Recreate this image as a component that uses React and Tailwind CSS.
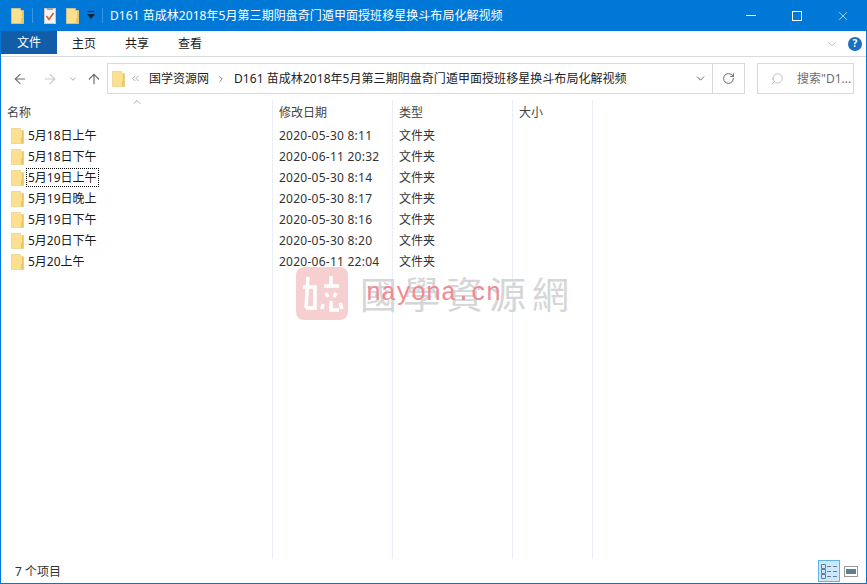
import { ArrowLeft, ArrowRight, ArrowUp, ChevronDown, ChevronRight, ChevronUp, ChevronsLeft, RotateCw, Search, X } from "lucide-react";

const rows = [
  { name: "5月18日上午", date: "2020-05-30 8:11" },
  { name: "5月18日下午", date: "2020-06-11 20:32" },
  { name: "5月19日上午", date: "2020-05-30 8:14", focus: true },
  { name: "5月19日晚上", date: "2020-05-30 8:17" },
  { name: "5月19日下午", date: "2020-05-30 8:16" },
  { name: "5月20日下午", date: "2020-05-30 8:20" },
  { name: "5月20上午", date: "2020-06-11 22:04" },
];

function Folder({ className }) {
  return (
    <svg className={className} width="13" height="16" viewBox="0 0 13 16">
      <path d="M0.5 0.5H9.5V2.5H12.5V15.5H0.5Z" fill="#fde08f" stroke="#e8cf8a" strokeWidth="0.7" />
      <path d="M10 10V15.5H12.5V3H11V10Z" fill="#eec65f" />
    </svg>
  );
}

function Sep() {
  return <div className="w-px h-[15px] bg-[#3a96de]" />;
}

export default function App() {
  return (
    <div className="relative w-[867px] h-[584px] flex flex-col bg-white overflow-hidden border-x border-b border-[#0078d7] text-[12px] text-[#1a1a1a] font-['Noto_Sans','Noto_Sans_CJK_SC',sans-serif]">
      {/* title bar */}
      <div className="h-[31px] shrink-0 bg-[#0078d7] flex items-center text-white pl-[10px]">
        <Folder />
        <div className="ml-[8px]"><Sep /></div>
        <svg className="ml-[11px]" width="12" height="16" viewBox="0 0 12 16">
          <rect x="0.5" y="0.5" width="11" height="15" fill="#f4f4f4" stroke="#c9c9c9" />
          <rect x="3" y="0" width="6" height="2" fill="#a9a9a9" />
          <path d="M2.5 8L5 11.5L9.5 5" fill="none" stroke="#d9572b" strokeWidth="1.5" />
        </svg>
        <Folder className="ml-[10px]" />
        <svg className="ml-[8px]" width="8" height="9" viewBox="0 0 8 9">
          <rect x="0.5" y="0" width="7" height="1" fill="#12263a" />
          <path d="M0 3H8L4 8Z" fill="#12263a" />
        </svg>
        <div className="ml-[7px]"><Sep /></div>
        <span className="ml-[7px] whitespace-nowrap tracking-[0.05px]">D161 苗成林2018年5月第三期阴盘奇门遁甲面授班移星换斗布局化解视频</span>
        <div className="ml-auto flex items-center h-full">
          <div className="w-[46px] flex justify-center"><div className="w-[10px] h-px bg-white" /></div>
          <div className="w-[45px] flex justify-center"><div className="w-[10px] h-[10px] border border-white" /></div>
          <div className="w-[47px] flex justify-center"><X size={14} strokeWidth={1.1} /></div>
        </div>
      </div>

      {/* ribbon tabs */}
      <div className="h-[26px] shrink-0 flex items-center border-b border-[#dadbdc]">
        <div className="w-[56px] h-[23px] self-start bg-[#125da8] text-white flex items-center justify-center">文件</div>
        <span className="ml-[15px]">主页</span>
        <span className="ml-[29px]">共享</span>
        <span className="ml-[29px]">查看</span>
        <ChevronDown className="ml-auto text-[#9a9a9a]" size={14} strokeWidth={1.2} />
        <div className="ml-[9px] mr-[4px] w-[14px] h-[14px] rounded-full bg-[#1a6fc0] text-white text-[10px] font-bold flex items-center justify-center">?</div>
      </div>

      {/* address row */}
      <div className="h-[37px] shrink-0 flex items-center pt-[6px] text-[#222]">
        <ArrowLeft className="ml-[11px] text-[#6d6d6d]" size={16} strokeWidth={1.6} />
        <ArrowRight className="ml-[14px] text-[#c9c9c9]" size={16} strokeWidth={1.6} />
        <ChevronDown className="ml-[10px] text-[#9a9a9a]" size={10} strokeWidth={2} />
        <ArrowUp className="ml-[8px] text-[#6d6d6d]" size={16} strokeWidth={1.8} />
        <div className="ml-[5px] w-[638px] h-[31px] flex items-center border border-[#d9d9d9]">
          <Folder className="ml-[4px]" />
          <ChevronsLeft className="ml-[5px] text-[#777]" size={11} strokeWidth={1.4} />
          <span className="ml-[8px]">国学资源网</span>
          <ChevronRight className="ml-[7px] text-[#777]" size={10} strokeWidth={2} />
          <span className="ml-[8px] whitespace-nowrap tracking-[0.05px]">D161 苗成林2018年5月第三期阴盘奇门遁甲面授班移星换斗布局化解视频</span>
          <ChevronDown className="ml-auto mr-[5px] text-[#555]" size={13} strokeWidth={1.6} />
          <div className="w-[32px] h-full border-l border-[#d9d9d9] flex items-center justify-center">
            <RotateCw className="text-[#666]" size={13} strokeWidth={1.8} />
          </div>
        </div>
        <div className="ml-[12px] w-[97px] h-[31px] flex items-center border border-[#d9d9d9] text-[#6d6d6d]">
          <Search className="ml-[12px] -scale-x-100 text-[#9a9a9a]" size={14} strokeWidth={1} />
          <span className="ml-[13px] whitespace-nowrap">搜索"D1...</span>
        </div>
      </div>

      {/* file list */}
      <div className="relative flex-1 min-h-0 flex items-stretch pt-[6px]">
        <ChevronUp className="absolute left-[130px] top-[2px] text-[#8a8a8a]" size={12} strokeWidth={1.4} />
        <div className="w-[272px] border-r border-[#e9eff4]">
          <div className="h-[25px] pl-[6px] flex items-center text-[#444]">名称</div>
          {rows.map((r) => (
            <div key={r.name} className="h-[21px] flex items-center pl-[10px]">
              <Folder />
              <span className={"ml-[2px] h-[19px] px-[1px] flex items-center border " + (r.focus ? "border-dotted border-black" : "border-transparent")}>{r.name}</span>
            </div>
          ))}
        </div>
        <div className="w-[120px] border-r border-[#e9eff4]">
          <div className="h-[25px] pl-[6px] flex items-center text-[#444]">修改日期</div>
          {rows.map((r) => (
            <div key={r.name} className="h-[21px] flex items-center pl-[6px] whitespace-nowrap tracking-[0.25px] text-[#333]">{r.date}</div>
          ))}
        </div>
        <div className="w-[120px] border-r border-[#e9eff4]">
          <div className="h-[25px] pl-[6px] flex items-center text-[#444]">类型</div>
          {rows.map((r) => (
            <div key={r.name} className="h-[21px] flex items-center pl-[6px] text-[#333]">文件夹</div>
          ))}
        </div>
        <div className="w-[80px] border-r border-[#e9eff4]">
          <div className="h-[25px] pl-[6px] flex items-center text-[#444]">大小</div>
        </div>

        {/* watermark */}
        <div className="absolute left-[295px] top-[173px] flex items-center gap-[12px]">
          <svg width="52" height="53" viewBox="0 0 52 53">
            <rect width="52" height="53" rx="8" fill="#f6d0d0" />
            <g fill="none" stroke="#fff" strokeWidth="3.5">
              <path d="M7 20H21M12 10L10 41M19 20V41H10" />
              <path d="M35 9V19M28 19H43M30 26L32 30M40 26L38 30M27 37L26 42M35 34V43H43M44 36L46 42" />
            </g>
          </svg>
          <span className="text-[37px] leading-none tracking-[6px] text-[#d6d6d6] whitespace-nowrap font-['Noto_Sans_CJK_TC',sans-serif]">國學資源網</span>
        </div>
        <div className="absolute left-[365px] top-[187px] text-[25px] leading-none text-[#ee8a92] whitespace-nowrap font-['Liberation_Mono',monospace]">nayona.cn</div>
      </div>

      {/* status bar */}
      <div className="h-[24px] shrink-0 flex items-center pl-[14px] text-[#333]">
        <span className="pt-[1px]">7 个项目</span>
        <div className="ml-auto w-[22px] h-[22px] bg-[#cce8ff] border border-[#5fb3e8] flex items-center justify-center">
          <svg width="16" height="15" viewBox="0 0 16 15" fill="none" stroke="#6b7b88">
            <path d="M0.5 0.5H4.5V4.5H0.5ZM0.5 5.5H4.5V9.5H0.5ZM0.5 10.5H4.5V14.5H0.5ZM6 2.5H10M12 2.5H16M6 7.5H10M12 7.5H16M6 12.5H10M12 12.5H16" />
          </svg>
        </div>
        <div className="w-[22px] h-[22px] flex items-center justify-center mr-[4px]">
          <svg width="14" height="11" viewBox="0 0 14 11">
            <rect x="0.5" y="0.5" width="13" height="10" fill="#fff" stroke="#999" />
            <rect x="2" y="3" width="10" height="5" fill="#5c7f94" />
          </svg>
        </div>
      </div>
    </div>
  );
}
